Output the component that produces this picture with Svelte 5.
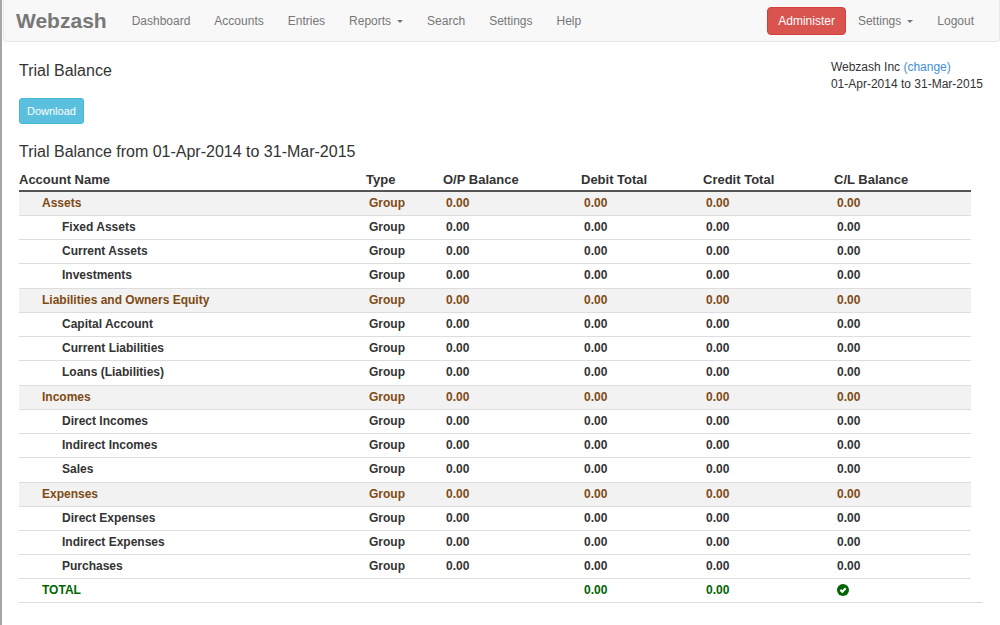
<script>
  const links = ['Dashboard', 'Accounts', 'Entries', 'Reports', 'Search', 'Settings', 'Help'];
  const headings = ['Account Name', 'Type', 'O/P Balance', 'Debit Total', 'Credit Total', 'C/L Balance'];
  const widths = [347, 77, 138, 122, 131, 137, 12];
  const groups = [
    { name: 'Assets', children: ['Fixed Assets', 'Current Assets', 'Investments'] },
    { name: 'Liabilities and Owners Equity', children: ['Capital Account', 'Current Liabilities', 'Loans (Liabilities)'] },
    { name: 'Incomes', children: ['Direct Incomes', 'Indirect Incomes', 'Sales'] },
    { name: 'Expenses', children: ['Direct Expenses', 'Indirect Expenses', 'Purchases'] }
  ];
  const rows = groups.flatMap((g, n) => [
    { name: g.name, top: true, last: false },
    ...g.children.map((name, i) => ({
      name,
      top: false,
      last: i === g.children.length - 1 && n < groups.length - 1
    }))
  ]);
</script>

<div class="page">
  <nav>
    <a class="brand" href="#home">Webzash</a>
    <div class="links">
      {#each links as link}
        <a href="#{link}">{link}{#if link === 'Reports'}<span class="caret"></span>{/if}</a>
      {/each}
    </div>
    <div class="user">
      <a class="admin" href="#admin">Administer</a>
      <a href="#user-settings">Settings<span class="caret"></span></a>
      <a href="#logout">Logout</a>
    </div>
  </nav>

  <main>
    <header>
      <h1>Trial Balance</h1>
      <div class="company">
        <div>Webzash Inc <a href="#change">(change)</a></div>
        <div>01-Apr-2014 to 31-Mar-2015</div>
      </div>
    </header>
    <button type="button">Download</button>
    <h2>Trial Balance from 01-Apr-2014 to 31-Mar-2015</h2>

    <table>
      <colgroup>
        {#each widths as w}<col style="width: {w}px" />{/each}
      </colgroup>
      <thead>
        <tr>{#each headings as h}<th scope="col">{h}</th>{/each}</tr>
      </thead>
      <tbody>
        {#each rows as row}
          <tr class:group={row.top} class:last={row.last}>
            <td class="name">{row.name}</td>
            <td>Group</td>
            <td>0.00</td>
            <td>0.00</td>
            <td>0.00</td>
            <td>0.00</td>
          </tr>
        {/each}
        <tr class="total">
          <td class="name">TOTAL</td>
          <td></td>
          <td></td>
          <td>0.00</td>
          <td>0.00</td>
          <td>
            <svg viewBox="0 0 12 12" role="img" aria-label="Balanced">
              <circle cx="6" cy="6" r="6" fill="#006400" />
              <path d="M3.4 5.9 L5.3 7.7 L8.7 4.3" fill="none" stroke="#fff" stroke-width="2.2" />
            </svg>
          </td>
          <td></td>
        </tr>
      </tbody>
    </table>
  </main>
</div>

<style>
  :global(body) {
    margin: 0;
    background: #fff;
  }
  .page {
    box-sizing: border-box;
    min-height: 100vh;
    padding-left: 1px;
    border-left: 2px solid #a5a5a5;
    font-family: "Liberation Sans", Arial, sans-serif;
    font-size: 12px;
    color: #333;
  }
  a {
    color: #428fd8;
    text-decoration: none;
  }
  nav {
    display: flex;
    align-items: center;
    box-sizing: border-box;
    height: 42px;
    padding: 1px 13px 0 12px;
    background: #f8f8f8;
    border: 1px solid #e7e7e7;
    border-top: 0;
    border-radius: 0 0 4px 4px;
  }
  nav a {
    padding: 0 12px;
    line-height: 26px;
    color: #777;
    white-space: nowrap;
  }
  nav .brand {
    padding: 0 13px 0 0;
    font-size: 21px;
    font-weight: bold;
  }
  .links,
  .user {
    display: flex;
    align-items: center;
  }
  .user {
    margin-left: auto;
  }
  nav .admin {
    padding: 0 10px;
    color: #fff;
    background: #d9534f;
    border: 1px solid #d43f3a;
    border-radius: 4px;
  }
  .caret {
    display: inline-block;
    margin-left: 6px;
    vertical-align: middle;
    border-top: 3px solid #777;
    border-left: 3px solid transparent;
    border-right: 3px solid transparent;
  }
  main {
    padding: 17px 17px 20px 16px;
  }
  header {
    display: flex;
    justify-content: space-between;
  }
  h1,
  h2 {
    margin: 0;
    font-size: 16px;
    font-weight: normal;
    line-height: 24px;
  }
  .company {
    line-height: 17px;
  }
  button {
    display: block;
    height: 26px;
    margin: 5px 0 16px;
    padding: 0 7px;
    font: 11px "Liberation Sans", Arial, sans-serif;
    color: #fff;
    background: #5bc0de;
    border: 1px solid #46b8da;
    border-radius: 3px;
  }
  table {
    width: 100%;
    table-layout: fixed;
    border-collapse: separate;
    border-spacing: 0;
  }
  th {
    height: 28px;
    padding: 0 0 2px;
    box-sizing: border-box;
    border-bottom: 2px solid #555;
    font-size: 13px;
    line-height: 16px;
    text-align: left;
    vertical-align: bottom;
  }
  td {
    box-sizing: border-box;
    height: 24px;
    padding: 0 3px 2px;
    border-bottom: 1px solid #ddd;
    font-weight: bold;
    line-height: 16px;
  }
  td.name {
    padding-left: 43px;
  }
  .last td {
    height: 25px;
  }
  .group td {
    color: #7f4a14;
    background: #f2f2f2;
  }
  .total td {
    color: #006400;
  }
  .group .name,
  .total .name {
    padding-left: 23px;
  }
  td svg {
    display: block;
    width: 12px;
    height: 12px;
  }
</style>
